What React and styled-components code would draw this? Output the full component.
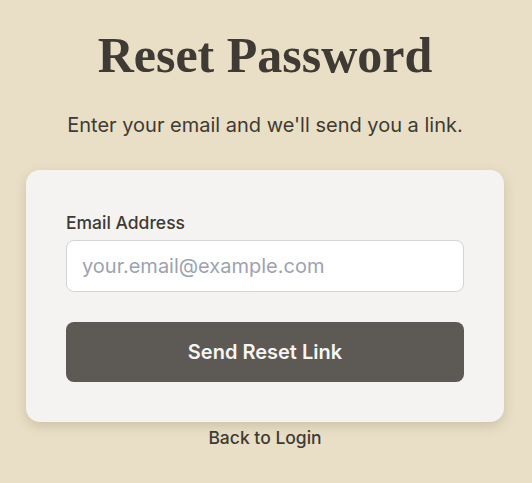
import React from 'react'
import styled, { createGlobalStyle } from 'styled-components'

const GlobalStyle = createGlobalStyle`
  * { box-sizing: border-box; }
  body {
    margin: 0;
    background: #e9dfc7;
    font-family: Inter, "Noto Sans", sans-serif;
  }
`

function App() {
  return (
    <>
      <GlobalStyle />
      <Page>
        <Title>Reset Password</Title>
        <Subtitle>Enter your email and we'll send you a link.</Subtitle>
        <Card>
          <Label htmlFor="email">Email Address</Label>
          <Input id="email" type="email" placeholder="your.email@example.com" />
          <SubmitButton>Send Reset Link</SubmitButton>
        </Card>
        <BackLink href="#">Back to Login</BackLink>
      </Page>
    </>
  )
}

const Page = styled.div`
  display: flex;
  flex-direction: column;
  align-items: center;
  padding: 26px 28px 0 26px;
  min-height: 483px;
`

const Title = styled.h1`
  margin: 0;
  font-family: "Liberation Serif", "DejaVu Serif", serif;
  font-weight: 700;
  font-size: 50px;
  line-height: 58px;
  color: #3f3a33;
`

const Subtitle = styled.p`
  margin: 28px 0 0;
  font-size: 20px;
  line-height: 26px;
  color: #3f3a33;
`

const Card = styled.div`
  width: 478px;
  margin-top: 32px;
  background: #f4f3f1;
  border-radius: 14px;
  padding: 42px 40px 40px;
  display: flex;
  flex-direction: column;
  box-shadow: 0 4px 12px rgba(80, 60, 30, 0.18);
`

const Label = styled.label`
  font-size: 17.5px;
  line-height: 22px;
  font-weight: 500;
  color: #3f3a33;
  margin-bottom: 6px;
`

const Input = styled.input`
  height: 52px;
  border: 1px solid #d4d4d6;
  border-radius: 8px;
  background: #fff;
  padding: 0 15px;
  font-family: inherit;
  font-size: 20px;
  color: #3f3a33;
  outline: none;
  &::placeholder { color: #9ca3af; }
`

const SubmitButton = styled.button`
  height: 60px;
  margin-top: 30px;
  border: none;
  border-radius: 8px;
  background: #5d5955;
  color: #f7f5f2;
  font-family: inherit;
  font-size: 20px;
  font-weight: 600;
  cursor: pointer;
`

const BackLink = styled.a`
  margin-top: 5px;
  font-size: 17.5px;
  line-height: 22px;
  font-weight: 500;
  color: #3f3a33;
  text-decoration: none;
`

export default App
